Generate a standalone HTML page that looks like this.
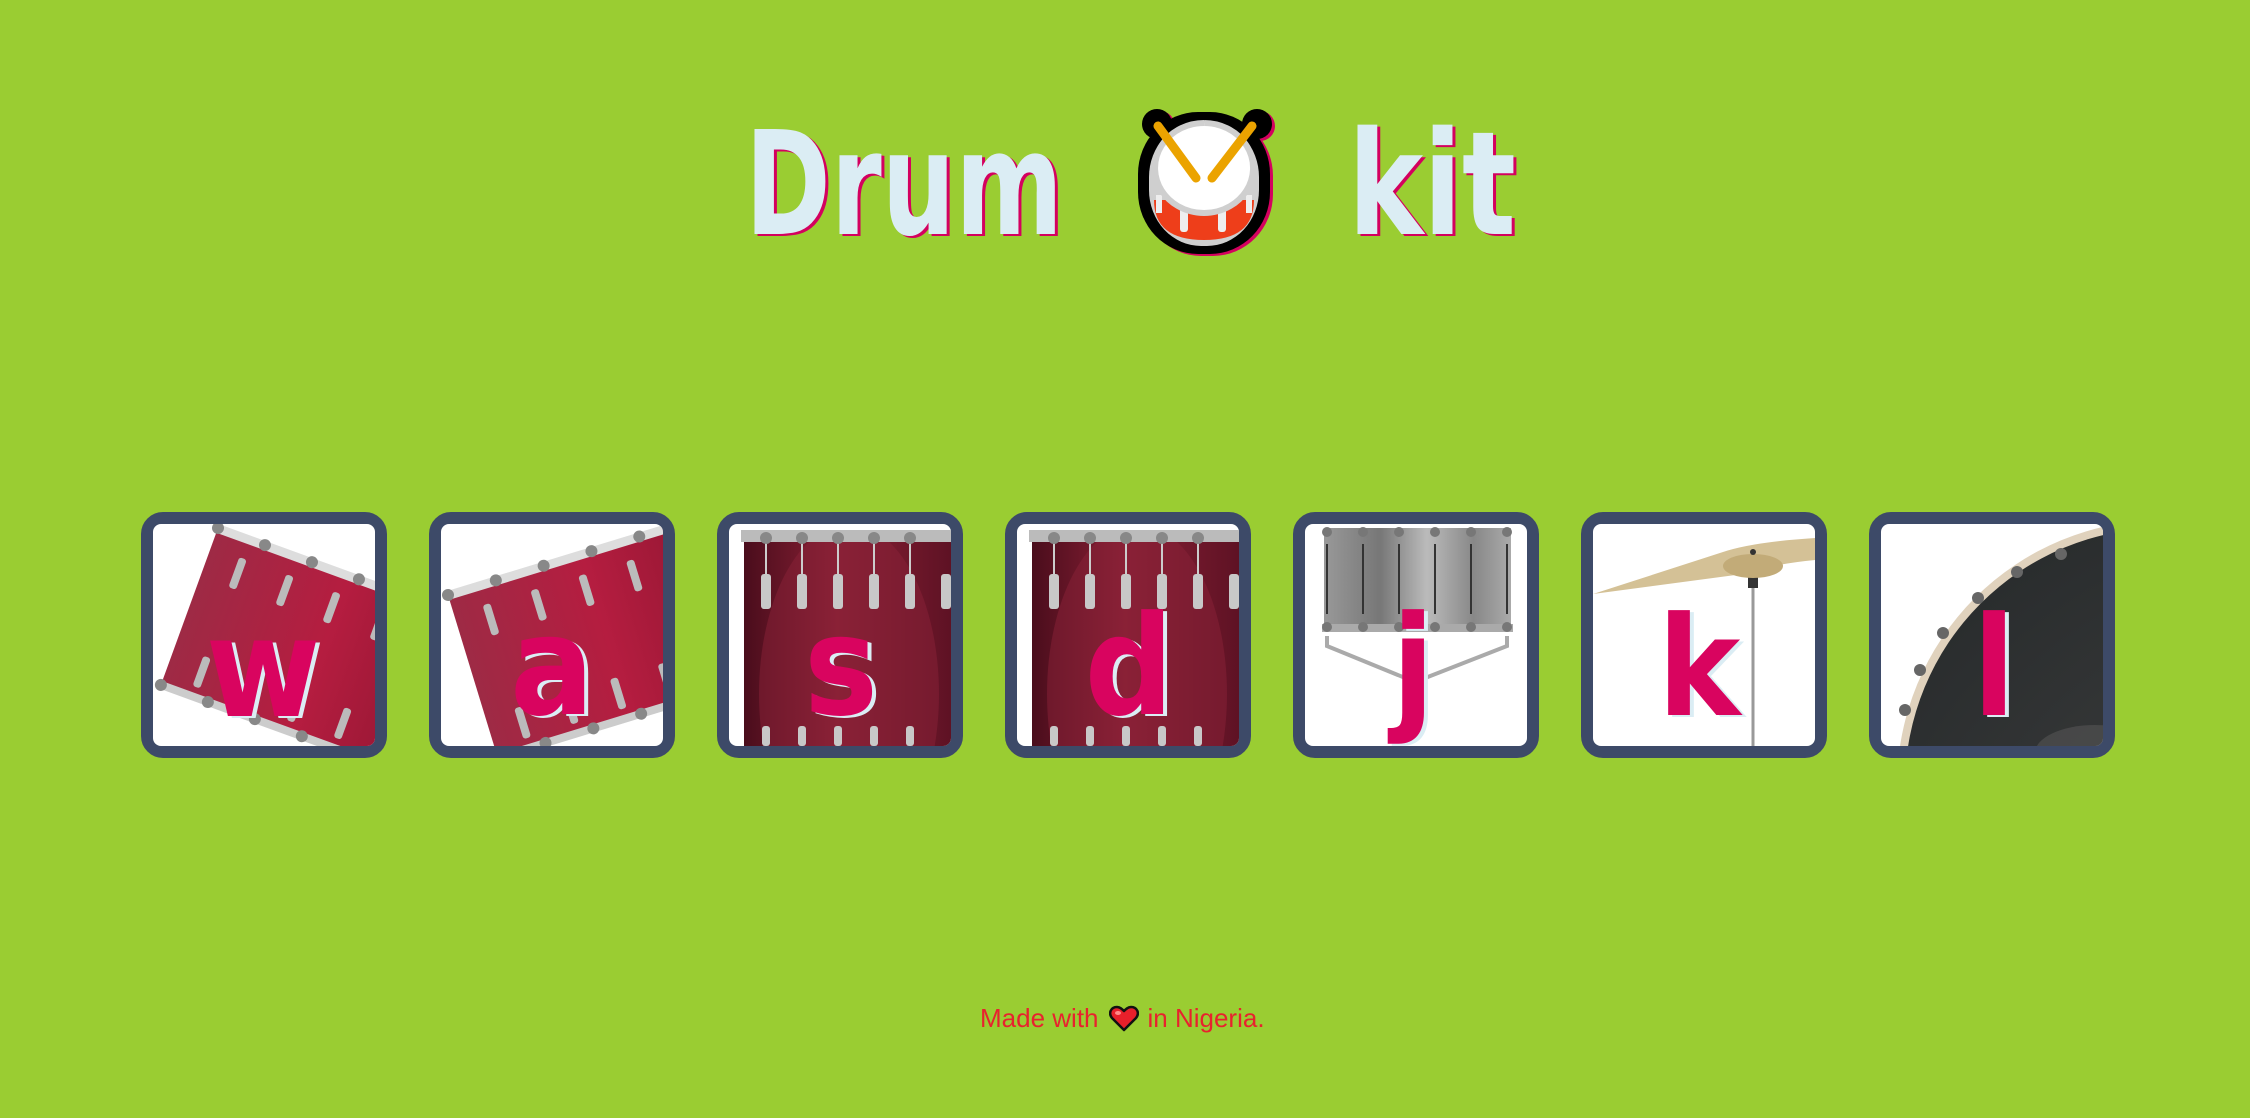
<!DOCTYPE html>
<html><head><meta charset="utf-8">
<style>
html,body{margin:0;padding:0}
body{width:2250px;height:1118px;background:#9acd32;position:relative;overflow:hidden;font-family:"Liberation Sans",sans-serif}
.tile{position:absolute;top:512px;width:222px;height:222px;border:12px solid #3d4a68;border-radius:22px;background:#3d4a68}
.tile svg{display:block;border-radius:8px;background:#fff}
.foot{position:absolute;left:980px;top:1003px;font-size:26px;color:#e8222e;white-space:nowrap}
.foot svg{vertical-align:-5px;margin:0 9px 0 10px}
.L{font-family:"DejaVu Sans Condensed","DejaVu Sans",sans-serif;font-weight:bold;font-size:138px}
</style></head><body>

<svg style="position:absolute;left:0;top:0" width="2250" height="300">
  <g font-family="DejaVu Sans, sans-serif" font-weight="bold" font-size="144">
    <text x="748" y="236" fill="#d4005f" textLength="318" lengthAdjust="spacingAndGlyphs">Drum</text>
    <text x="745" y="234" fill="#dbedf4" textLength="318" lengthAdjust="spacingAndGlyphs">Drum</text>
    <text x="1351" y="236" fill="#d4005f" textLength="168" lengthAdjust="spacingAndGlyphs">kit</text>
    <text x="1348" y="234" fill="#dbedf4" textLength="168" lengthAdjust="spacingAndGlyphs">kit</text>
  </g>
  <g transform="translate(1130,100)">
    <g transform="translate(3,2)" fill="#d4005f">
      <circle cx="27" cy="24" r="15"/><circle cx="127" cy="24" r="15"/>
      <rect x="8" y="12" width="132" height="142" rx="60" ry="62"/>
    </g>
    <circle cx="27" cy="24" r="15" fill="#000"/><circle cx="127" cy="24" r="15" fill="#000"/>
    <rect x="8" y="12" width="132" height="142" rx="60" ry="62" fill="#000"/>
    <rect x="19" y="21" width="110" height="125" rx="52" ry="56" fill="#cfcfcf"/>
    <path d="M24 100 Q24 140 74 140 Q124 140 124 100 Z" fill="#ee3e1a"/>
    <rect x="50" y="105" width="8" height="27" rx="3" fill="#eee"/>
    <rect x="88" y="105" width="8" height="27" rx="3" fill="#eee"/>
    <rect x="26" y="95" width="6" height="18" fill="#eee"/><rect x="116" y="95" width="6" height="18" fill="#eee"/>
    <ellipse cx="74" cy="68" rx="49" ry="45" fill="#fff"/>
    <path d="M74 23 a49 45 0 1 0 0.1 0" fill="none" stroke="#cfcfcf" stroke-width="6"/>
    <line x1="28" y1="26" x2="66" y2="78" stroke="#eba300" stroke-width="9" stroke-linecap="round"/>
    <line x1="122" y1="26" x2="82" y2="78" stroke="#eba300" stroke-width="9" stroke-linecap="round"/>
  </g>
</svg>

<!-- w -->
<div class="tile" style="left:141px">
<svg width="222" height="222">
 <defs><linearGradient id="rg" x1="0" x2="1"><stop offset="0" stop-color="#9e2a45"/><stop offset=".5" stop-color="#b51d40"/><stop offset="1" stop-color="#8e1530"/></linearGradient>
 <linearGradient id="rg2" x1="0" x2="1"><stop offset="0" stop-color="#4a0d1c"/><stop offset=".45" stop-color="#8a2035"/><stop offset="1" stop-color="#5e1224"/></linearGradient>
 <clipPath id="dc"><rect x="15" y="12" width="207" height="210"/></clipPath></defs>
 <g transform="translate(65,4) rotate(20)">
  <rect x="0" y="0" width="280" height="168" fill="url(#rg)"/>
  <rect x="0" y="-4" width="280" height="9" fill="#ddd"/>
  <rect x="0" y="163" width="280" height="8" fill="#ccc"/>
  <g fill="#bbb"><rect x="30" y="20" width="8" height="32" rx="3"/><rect x="80" y="20" width="8" height="32" rx="3"/><rect x="130" y="20" width="8" height="32" rx="3"/><rect x="180" y="20" width="8" height="32" rx="3"/>
  <rect x="30" y="125" width="8" height="32" rx="3"/><rect x="80" y="125" width="8" height="32" rx="3"/><rect x="130" y="125" width="8" height="32" rx="3"/><rect x="180" y="125" width="8" height="32" rx="3"/></g>
  <g fill="#888"><circle cx="0" cy="0" r="6"/><circle cx="50" cy="0" r="6"/><circle cx="100" cy="0" r="6"/><circle cx="150" cy="0" r="6"/><circle cx="200" cy="0" r="6"/>
  <circle cx="0" cy="167" r="6"/><circle cx="50" cy="167" r="6"/><circle cx="100" cy="167" r="6"/><circle cx="150" cy="167" r="6"/></g>
 </g>
 <g class="L" text-anchor="middle">
  <text x="114" y="194" fill="#dbedf4">w</text><text x="110" y="192" fill="#d9045f">w</text>
 </g>
</svg></div>

<!-- a -->
<div class="tile" style="left:429px">
<svg width="222" height="222">
 <g transform="translate(7,71) rotate(-17)">
  <rect x="0" y="0" width="280" height="170" fill="url(#rg)"/>
  <rect x="0" y="-4" width="280" height="9" fill="#ddd"/>
  <rect x="0" y="166" width="280" height="8" fill="#ccc"/>
  <g fill="#bbb"><rect x="30" y="20" width="8" height="32" rx="3"/><rect x="80" y="20" width="8" height="32" rx="3"/><rect x="130" y="20" width="8" height="32" rx="3"/><rect x="180" y="20" width="8" height="32" rx="3"/>
  <rect x="30" y="128" width="8" height="32" rx="3"/><rect x="80" y="128" width="8" height="32" rx="3"/><rect x="130" y="128" width="8" height="32" rx="3"/><rect x="180" y="128" width="8" height="32" rx="3"/></g>
  <g fill="#888"><circle cx="0" cy="0" r="6"/><circle cx="50" cy="0" r="6"/><circle cx="100" cy="0" r="6"/><circle cx="150" cy="0" r="6"/><circle cx="200" cy="0" r="6"/>
  <circle cx="50" cy="170" r="6"/><circle cx="100" cy="170" r="6"/><circle cx="150" cy="170" r="6"/></g>
 </g>
 <g class="L" text-anchor="middle">
  <text x="115" y="192" fill="#dbedf4">a</text><text x="111" y="190" fill="#d9045f">a</text>
 </g>
</svg></div>

<!-- s -->
<div class="tile" style="left:717px">
<svg width="222" height="222">
 <rect x="15" y="12" width="207" height="210" fill="url(#rg2)"/>
 <ellipse cx="120" cy="170" rx="90" ry="170" fill="#8a2238" opacity=".5" clip-path="url(#dc)"/>
 <rect x="12" y="6" width="210" height="12" fill="#bbb"/>
 <g fill="#c8c8c8"><rect x="32" y="50" width="10" height="35" rx="3"/><rect x="68" y="50" width="10" height="35" rx="3"/><rect x="104" y="50" width="10" height="35" rx="3"/><rect x="140" y="50" width="10" height="35" rx="3"/><rect x="176" y="50" width="10" height="35" rx="3"/><rect x="212" y="50" width="10" height="35" rx="3"/>
 <rect x="33" y="202" width="8" height="20" rx="3"/><rect x="69" y="202" width="8" height="20" rx="3"/><rect x="105" y="202" width="8" height="20" rx="3"/><rect x="141" y="202" width="8" height="20" rx="3"/><rect x="177" y="202" width="8" height="20" rx="3"/></g>
 <g stroke="#ccc" stroke-width="2"><line x1="37" y1="15" x2="37" y2="50"/><line x1="73" y1="15" x2="73" y2="50"/><line x1="109" y1="15" x2="109" y2="50"/><line x1="145" y1="15" x2="145" y2="50"/><line x1="181" y1="15" x2="181" y2="50"/></g>
 <g fill="#888"><circle cx="37" cy="14" r="6"/><circle cx="73" cy="14" r="6"/><circle cx="109" cy="14" r="6"/><circle cx="145" cy="14" r="6"/><circle cx="181" cy="14" r="6"/></g>
 <g class="L" text-anchor="middle">
  <text x="116" y="192" fill="#dbedf4">s</text><text x="112" y="190" fill="#d9045f">s</text>
 </g>
</svg></div>

<!-- d -->
<div class="tile" style="left:1005px">
<svg width="222" height="222">
 <rect x="15" y="12" width="207" height="210" fill="url(#rg2)"/>
 <ellipse cx="120" cy="170" rx="90" ry="170" fill="#8a2238" opacity=".5" clip-path="url(#dc)"/>
 <rect x="12" y="6" width="210" height="12" fill="#bbb"/>
 <g fill="#c8c8c8"><rect x="32" y="50" width="10" height="35" rx="3"/><rect x="68" y="50" width="10" height="35" rx="3"/><rect x="104" y="50" width="10" height="35" rx="3"/><rect x="140" y="50" width="10" height="35" rx="3"/><rect x="176" y="50" width="10" height="35" rx="3"/><rect x="212" y="50" width="10" height="35" rx="3"/>
 <rect x="33" y="202" width="8" height="20" rx="3"/><rect x="69" y="202" width="8" height="20" rx="3"/><rect x="105" y="202" width="8" height="20" rx="3"/><rect x="141" y="202" width="8" height="20" rx="3"/><rect x="177" y="202" width="8" height="20" rx="3"/></g>
 <g stroke="#ccc" stroke-width="2"><line x1="37" y1="15" x2="37" y2="50"/><line x1="73" y1="15" x2="73" y2="50"/><line x1="109" y1="15" x2="109" y2="50"/><line x1="145" y1="15" x2="145" y2="50"/><line x1="181" y1="15" x2="181" y2="50"/></g>
 <g fill="#888"><circle cx="37" cy="14" r="6"/><circle cx="73" cy="14" r="6"/><circle cx="109" cy="14" r="6"/><circle cx="145" cy="14" r="6"/><circle cx="181" cy="14" r="6"/></g>
 <g class="L" text-anchor="middle">
  <text x="116" y="192" fill="#dbedf4">d</text><text x="112" y="190" fill="#d9045f">d</text>
 </g>
</svg></div>

<!-- j -->
<div class="tile" style="left:1293px">
<svg width="222" height="222">
 <defs><linearGradient id="gg" x1="0" x2="1"><stop offset="0" stop-color="#999"/><stop offset=".3" stop-color="#777"/><stop offset=".55" stop-color="#bbb"/><stop offset=".8" stop-color="#888"/><stop offset="1" stop-color="#aaa"/></linearGradient></defs>
 <rect x="19" y="4" width="187" height="102" fill="url(#gg)"/>
 <g stroke="#333" stroke-width="2"><line x1="22" y1="20" x2="22" y2="90"/><line x1="58" y1="20" x2="58" y2="90"/><line x1="94" y1="20" x2="94" y2="90"/><line x1="130" y1="20" x2="130" y2="90"/><line x1="166" y1="20" x2="166" y2="90"/><line x1="202" y1="20" x2="202" y2="90"/></g>
 <rect x="17" y="100" width="191" height="8" fill="#aaa"/>
 <g fill="#777"><circle cx="22" cy="8" r="5"/><circle cx="58" cy="8" r="5"/><circle cx="94" cy="8" r="5"/><circle cx="130" cy="8" r="5"/><circle cx="166" cy="8" r="5"/><circle cx="202" cy="8" r="5"/>
 <circle cx="22" cy="103" r="5"/><circle cx="58" cy="103" r="5"/><circle cx="94" cy="103" r="5"/><circle cx="130" cy="103" r="5"/><circle cx="166" cy="103" r="5"/><circle cx="202" cy="103" r="5"/></g>
 <path d="M22 112 L22 122 L110 158 L202 122 L202 112" fill="none" stroke="#aaa" stroke-width="4"/>
 <g class="L" text-anchor="middle">
  <text x="112" y="192" fill="#dbedf4">j</text><text x="108" y="190" fill="#d9045f">j</text>
 </g>
</svg></div>

<!-- k -->
<div class="tile" style="left:1581px">
<svg width="222" height="222">
 <line x1="160" y1="60" x2="160" y2="222" stroke="#999" stroke-width="3"/>
 <rect x="155" y="52" width="10" height="12" fill="#333"/>
 <path d="M0 70 L130 28 Q160 18 222 14 L222 36 Q180 40 150 50 Z" fill="#d4c196"/>
 <ellipse cx="160" cy="42" rx="30" ry="12" fill="#c2ab78"/>
 <circle cx="160" cy="28" r="3" fill="#333"/>
 <g class="L" text-anchor="middle">
  <text x="110" y="193" fill="#dbedf4">k</text><text x="106" y="191" fill="#d9045f">k</text>
 </g>
</svg></div>

<!-- l -->
<div class="tile" style="left:1869px">
<svg width="222" height="222">
 <defs><radialGradient id="bk" cx=".8" cy=".9" r="1"><stop offset="0" stop-color="#444"/><stop offset="1" stop-color="#2a2d2e"/></radialGradient></defs>
 <circle cx="282" cy="262" r="266" fill="#e0d2bd"/>
 <circle cx="282" cy="262" r="258" fill="url(#bk)"/>
 <ellipse cx="214" cy="229" rx="60" ry="28" fill="#555" opacity=".6"/>
 <g fill="#666"><circle cx="24" cy="186" r="6"/><circle cx="39" cy="146" r="6"/><circle cx="62" cy="109" r="6"/><circle cx="97" cy="74" r="6"/><circle cx="136" cy="48" r="6"/><circle cx="180" cy="30" r="6"/></g>
 <g class="L" text-anchor="middle">
  <text x="117" y="193" fill="#dbedf4">l</text><text x="113" y="191" fill="#d9045f">l</text>
 </g>
</svg></div>

<div class="foot">Made with<svg width="30" height="27" viewBox="0 0 30 27"><path d="M15 25 L3 13 C-1 8 2 2 8 2 C11 2 13 4 15 6 C17 4 19 2 22 2 C28 2 31 8 27 13 Z" fill="#e8202b" stroke="#111" stroke-width="2.5" stroke-linejoin="round"/><ellipse cx="9" cy="8" rx="3" ry="2" fill="#ff8a8a"/></svg>in Nigeria.</div>

</body></html>
